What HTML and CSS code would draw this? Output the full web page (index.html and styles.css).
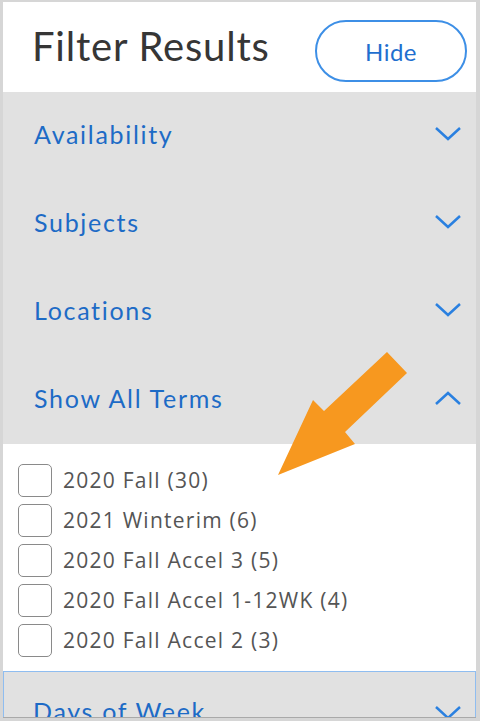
FILE: index.html
```html
<!DOCTYPE html>
<html lang="en">
<head>
  <meta charset="UTF-8">
  <meta name="viewport" content="width=device-width, initial-scale=1.0">
  <title>Filter Results</title>
  <link rel="stylesheet" href="styles.css">
</head>
<body>
  <div class="panel">
    <div class="panel-header">
      <h1 class="panel-title">Filter Results</h1>
      <button class="hide-button">Hide</button>
    </div>

    <div class="filter-group">
      <span class="filter-label">Availability</span>
      <svg class="chevron" viewBox="0 0 26 14"><path d="M1 1 L13 12 L25 1"/></svg>
    </div>
    <div class="filter-group">
      <span class="filter-label">Subjects</span>
      <svg class="chevron" viewBox="0 0 26 14"><path d="M1 1 L13 12 L25 1"/></svg>
    </div>
    <div class="filter-group">
      <span class="filter-label">Locations</span>
      <svg class="chevron" viewBox="0 0 26 14"><path d="M1 1 L13 12 L25 1"/></svg>
    </div>
    <div class="filter-group">
      <span class="filter-label">Show All Terms</span>
      <svg class="chevron" viewBox="0 0 26 14"><path d="M1 13 L13 2 L25 13"/></svg>
    </div>

    <ul class="term-list">
      <li><span class="checkbox"></span>2020 Fall (30)</li>
      <li><span class="checkbox"></span>2021 Winterim (6)</li>
      <li><span class="checkbox"></span>2020 Fall Accel 3 (5)</li>
      <li><span class="checkbox"></span>2020 Fall Accel 1-12WK (4)</li>
      <li><span class="checkbox"></span>2020 Fall Accel 2 (3)</li>
    </ul>

    <div class="filter-group focused">
      <span class="filter-label">Days of Week</span>
      <svg class="chevron" viewBox="0 0 26 14"><path d="M1 1 L13 12 L25 1"/></svg>
    </div>

    <svg class="pointer-arrow" viewBox="0 0 480 721">
      <polygon points="387,352 407,373 345,432 355,444 278,475 313,400 324,411"/>
    </svg>
  </div>
</body>
</html>
```

FILE: styles.css
```css
body {
  margin: 0;
  background: #d6d6d6;
  font-family: 'Open Sans', sans-serif;
  overflow: hidden;
}

.panel {
  position: relative;
  margin: 2px 4px 0 3px;
  height: 716px;
  background: #ffffff;
  overflow: hidden;
  border-bottom: 1px solid #a9a9a9;
  box-sizing: border-box;
}

.panel-header {
  height: 90px;
  display: flex;
  align-items: flex-start;
  justify-content: space-between;
  padding: 0 9px 0 29px;
  box-sizing: border-box;
}

.panel-title {
  margin: 20px 0 0;
  font-family: 'Lato', sans-serif;
  font-weight: 400;
  font-size: 40px;
  letter-spacing: 0.8px;
  color: #363636;
}

.hide-button {
  margin-top: 18px;
  width: 152px;
  height: 62px;
  border: 2px solid #3d8fe6;
  border-radius: 31px;
  background: #ffffff;
  color: #1f6fcf;
  font-family: 'Lato', sans-serif;
  font-size: 24px;
  letter-spacing: 0.5px;
  padding: 0;
}

.filter-group {
  height: 88px;
  background: #e1e1e1;
  display: flex;
  align-items: center;
  justify-content: space-between;
  padding: 0 15px 4px 31px;
  box-sizing: border-box;
}

.filter-label {
  font-family: 'Lato', sans-serif;
  font-size: 25px;
  letter-spacing: 1.7px;
  color: #1d6bc6;
}

.chevron {
  width: 26px;
  height: 14px;
  fill: none;
  stroke: #2a80e0;
  stroke-width: 2.5;
}

.term-list {
  list-style: none;
  margin: 0;
  padding: 16px 0 0 15px;
  height: 227px;
  box-sizing: border-box;
}

.term-list li {
  display: flex;
  align-items: center;
  gap: 11px;
  height: 40px;
  font-size: 21px;
  letter-spacing: 1.25px;
  color: #555555;
}

.checkbox {
  width: 34px;
  height: 33px;
  border: 1.5px solid #8a8a8a;
  border-radius: 5px;
  box-sizing: border-box;
}

.focused {
  border: 1.5px solid #8fbdf0;
  align-items: flex-start;
  padding: 24px 14px 0 29px;
}

.focused .chevron {
  margin-top: 10px;
}

.pointer-arrow {
  position: absolute;
  left: -3px;
  top: -2px;
  width: 480px;
  height: 721px;
  fill: #f7981f;
}
```
